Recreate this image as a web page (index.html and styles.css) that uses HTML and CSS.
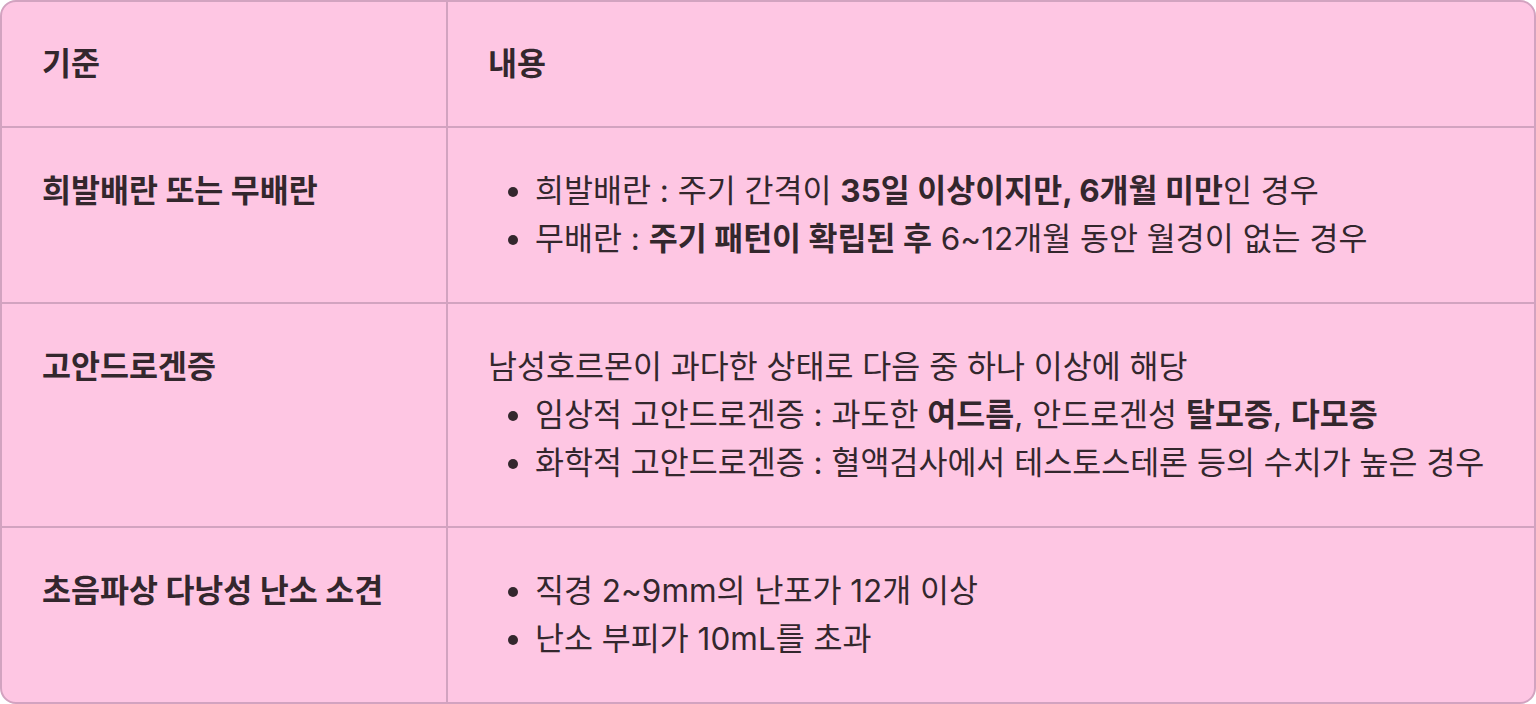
FILE: index.html
```html
<!DOCTYPE html>
<html lang="ko">
<head>
<meta charset="utf-8">
<title>다낭성 난소 증후군 진단 기준</title>
<link rel="stylesheet" href="styles.css">
</head>
<body>
<table class="criteria">
  <colgroup>
    <col class="col-key">
    <col class="col-val">
  </colgroup>
  <thead>
    <tr>
      <th class="cell key">기준</th>
      <th class="cell val head">내용</th>
    </tr>
  </thead>
  <tbody>
    <tr>
      <td class="cell key">희발배란 또는 무배란</td>
      <td class="cell val">
        <ul class="items">
          <li>희발배란 : 주기 간격이 <strong>35일 이상이지만, 6개월 미만</strong>인 경우</li>
          <li>무배란 : <strong>주기 패턴이 확립된 후</strong> 6~12개월 동안 월경이 없는 경우</li>
        </ul>
      </td>
    </tr>
    <tr>
      <td class="cell key">고안드로겐증</td>
      <td class="cell val">
        <p class="lead">남성호르몬이 과다한 상태로 다음 중 하나 이상에 해당</p>
        <ul class="items">
          <li>임상적 고안드로겐증 : 과도한 <strong>여드름</strong>, 안드로겐성 <strong>탈모증</strong>, <strong>다모증</strong></li>
          <li>화학적 고안드로겐증 : 혈액검사에서 테스토스테론 등의 수치가 높은 경우</li>
        </ul>
      </td>
    </tr>
    <tr>
      <td class="cell key last">초음파상 다낭성 난소 소견</td>
      <td class="cell val last">
        <ul class="items">
          <li>직경 2~9mm의 난포가 12개 이상</li>
          <li>난소 부피가 10mL를 초과</li>
        </ul>
      </td>
    </tr>
  </tbody>
</table>
</body>
</html>
```

FILE: styles.css
```css
html, body {
  margin: 0;
  padding: 0;
  background: #ffffff;
}

body {
  font-family: Inter, "Noto Sans CJK KR", sans-serif;
  color: #33272d;
}

.criteria {
  width: 1536px;
  height: 704px;
  box-sizing: border-box;
  table-layout: fixed;
  border-collapse: separate;
  border-spacing: 0;
  border: 2px solid #d2a3c0;
  border-radius: 16px;
  background: #fec6e3;
  overflow: hidden;
}

.col-key {
  width: 446px;
}

.cell {
  box-sizing: border-box;
  padding: 39px 40px;
  vertical-align: top;
  text-align: left;
  font-size: 31.5px;
  line-height: 48px;
  border-bottom: 2px solid #d2a3c0;
}

thead .cell {
  padding-top: 38px;
  padding-bottom: 38px;
}

.cell.key {
  border-right: 2px solid #d2a3c0;
  font-weight: 700;
}

.cell.val {
  font-weight: 400;
}

.cell.val.head {
  font-weight: 700;
}

.cell.last {
  border-bottom: none;
}

.items {
  margin: 0;
  padding-left: 47px;
  list-style: disc;
}

.lead {
  margin: 0;
}

strong {
  font-weight: 700;
}
```
